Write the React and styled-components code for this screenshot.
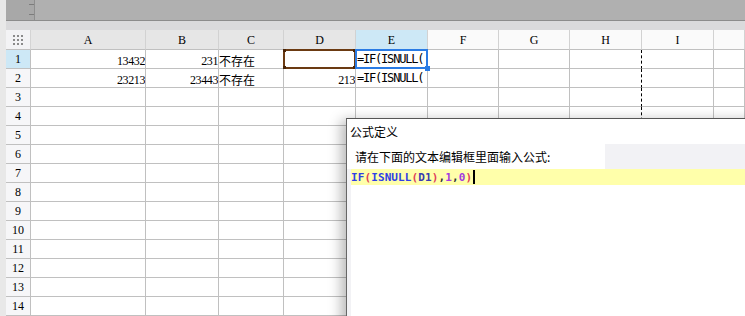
import React from "react";
import styled, { createGlobalStyle } from "styled-components";

const GlobalStyle = createGlobalStyle`
  html, body {
    margin: 0;
    padding: 0;
    background: #ffffff;
    overflow: hidden;
  }
`;

const COLS = ["A", "B", "C", "D", "E", "F", "G", "H", "I", ""];
const ROWS = Array.from({ length: 14 }, (_, i) => i + 1);

// cell contents, keyed "row-col"
const DATA = {
  "1-A": { text: "13432", kind: "num" },
  "1-B": { text: "231", kind: "num" },
  "1-C": { text: "不存在", kind: "cjk" },
  "1-E": { text: "=IF(ISNULL(", kind: "formula" },
  "2-A": { text: "23213", kind: "num" },
  "2-B": { text: "23443", kind: "num" },
  "2-C": { text: "不存在", kind: "cjk" },
  "2-D": { text: "213", kind: "num" },
  "2-E": { text: "=IF(ISNULL(", kind: "formula" },
};

const Page = styled.div`
  position: relative;
  width: 745px;
  height: 316px;
  overflow: hidden;
  background: #e8e8e8;
  padding-left: 6px;
  box-sizing: border-box;
  display: flex;
  flex-direction: column;
`;

const TopBar = styled.div`
  height: 24px;
  border-bottom: 1px solid #8c8c8c;
  background: #b0b0b0;
  display: flex;
`;

const RulerStub = styled.div`
  width: 29px;
  border-right: 1px solid #8e8e8e;
  background: #a8a8a8;
  display: flex;
  flex-direction: column;
  align-items: flex-end;
  gap: 9px;
  padding-top: 4px;
  box-sizing: border-box;
`;

const Tick = styled.span`
  display: block;
  width: 5px;
  height: 1px;
  background: #7c7c7c;
`;

const Band = styled.div`
  height: 10px;
  background: #dadadc;
`;

const Sheet = styled.div`
  display: grid;
  grid-template-columns: 25px 115px 73px 65px 72px 72px 71px 71px 72px 72px 1fr;
  grid-template-rows: 20px;
  grid-auto-rows: 19px;
  background: #ffffff;
  flex: 1;
`;

const Corner = styled.div`
  background: #f3f3f5;
  border-right: 1px solid #d4d4d4;
  border-bottom: 1px solid #c0c0c0;
  display: grid;
  grid-template-columns: repeat(3, 2px);
  grid-template-rows: repeat(3, 2px);
  gap: 2px;
  align-content: center;
  justify-content: center;
  padding-top: 1px;
  box-sizing: border-box;
`;

const Dot = styled.span`
  background: #8a8a8a;
`;

const HEAD_BG = { gray: "#e6e6e6", sel: "#cde8f6", white: "#fafafa" };

const ColHead = styled.div`
  background: ${({ $tone }) => HEAD_BG[$tone]};
  border-right: 1px solid #d2d2d2;
  border-bottom: 1px solid #c0c0c0;
  display: flex;
  align-items: center;
  justify-content: center;
  padding-top: 2px;
  box-sizing: border-box;
  font-family: "Liberation Serif", serif;
  font-size: 12px;
  color: #000;
`;

const RowHead = styled.div`
  background: ${({ $sel }) => ($sel ? "#cde8f6" : "#f6f6f8")};
  border-right: 1px solid #c0c0c0;
  border-bottom: 1px solid #c0c0c0;
  display: flex;
  align-items: center;
  justify-content: center;
  font-family: "Liberation Serif", serif;
  font-size: 12px;
  color: #000;
`;

const Cell = styled.div`
  position: relative;
  border-right: 1px ${({ $dashed }) => ($dashed ? "dashed #000" : "solid #c0c0c0")};
  border-bottom: 1px solid #c0c0c0;
  display: flex;
  justify-content: ${({ $right }) => ($right ? "flex-end" : "flex-start")};
  min-width: 0;
  overflow: visible;
`;

const CellText = styled.span`
  display: block;
  overflow: hidden;
  white-space: nowrap;
  line-height: 14px;
  padding-top: ${({ $kind }) => ($kind === "formula" ? "2px" : "4px")};
  padding-left: ${({ $kind }) => ($kind === "formula" ? "1px" : "0")};
  font-family: ${({ $kind }) =>
    $kind === "formula"
      ? '"DejaVu Sans Mono", monospace'
      : $kind === "cjk"
      ? '"Noto Sans CJK SC", sans-serif'
      : '"Liberation Serif", serif'};
  font-size: ${({ $kind }) => ($kind === "formula" ? "12px" : "12px")};
  letter-spacing: ${({ $kind }) =>
    $kind === "formula" ? "-1.2px" : $kind === "num" ? "-0.4px" : "0"};
  color: #000;
`;

const Marquee = styled.span`
  position: absolute;
  top: -1px;
  left: -1px;
  right: -1px;
  bottom: -1px;
  border: 2px solid ${({ $color }) => $color};
  pointer-events: none;
  z-index: 2;
`;

const Knob = styled.span`
  position: absolute;
  width: ${({ $size }) => $size}px;
  height: ${({ $size }) => $size}px;
  background: ${({ $color }) => $color};
  ${({ $at }) => $at}
`;

const Dialog = styled.div`
  position: absolute;
  left: 346px;
  top: 118px;
  width: 440px;
  height: 220px;
  border-left: 1px solid #666;
  border-top: 1px solid #555;
  background: #f2f2f5;
  box-shadow: -5px 2px 12px rgba(0, 0, 0, 0.28);
  display: flex;
  flex-direction: column;
  z-index: 5;
`;

const TitleBar = styled.div`
  height: 25px;
  background: #ffffff;
  display: flex;
  align-items: center;
  padding-left: 3px;
  font-family: "Noto Sans CJK SC", sans-serif;
  font-size: 12px;
  color: #000;
`;

const LabelRow = styled.div`
  height: 25px;
  display: flex;
`;

const Label = styled.div`
  width: 250px;
  background: #ffffff;
  display: flex;
  align-items: center;
  padding-left: 8px;
  font-family: "Noto Sans CJK SC", sans-serif;
  font-size: 12px;
  color: #000;
`;

const Editor = styled.div`
  flex: 1;
  margin-left: 4px;
  background: #ffffff;
`;

const EditorLine = styled.div`
  height: 16px;
  background: ${({ $current }) => ($current ? "#ffffaa" : "transparent")};
  display: flex;
  align-items: center;
  font-family: "DejaVu Sans Mono", monospace;
  font-weight: bold;
  font-size: 11px;
  letter-spacing: 0.1px;
`;

const TOKEN_COLOR = {
  fn: "#2f3fe6",
  paren: "#e0405a",
  ref: "#3b3bb0",
  num: "#a23be0",
  sep: "#333333",
};

const Tok = styled.span`
  color: ${({ $t }) => TOKEN_COLOR[$t]};
`;

const Caret = styled.span`
  display: inline-block;
  width: 2px;
  height: 14px;
  margin-left: 1px;
  background: #000;
`;

const FORMULA = [
  ["IF", "fn"],
  ["(", "paren"],
  ["ISNULL", "fn"],
  ["(", "paren"],
  ["D1", "ref"],
  [")", "paren"],
  [",", "sep"],
  ["1", "num"],
  [",", "sep"],
  ["0", "num"],
  [")", "paren"],
];

const headTone = (c) => {
  if (c === "E") return "sel";
  if (["A", "B", "C", "D"].includes(c)) return "gray";
  return "white";
};

export default function App() {
  return (
    <>
      <GlobalStyle />
      <Page>
        <TopBar>
          <RulerStub>
            <Tick />
            <Tick />
          </RulerStub>
        </TopBar>
        <Band />
        <Sheet>
          <Corner>
            {Array.from({ length: 9 }, (_, i) => (
              <Dot key={i} />
            ))}
          </Corner>
          {COLS.map((c, i) => (
            <ColHead key={i} $tone={headTone(c)}>
              {c}
            </ColHead>
          ))}
          {ROWS.map((r) => (
            <React.Fragment key={r}>
              <RowHead $sel={r === 1}>{r}</RowHead>
              {COLS.map((c, i) => {
                const d = DATA[`${r}-${c}`];
                const isD1 = r === 1 && c === "D";
                const isE1 = r === 1 && c === "E";
                return (
                  <Cell key={i} $right={d && d.kind === "num"} $dashed={c === "H"}>
                    {d && <CellText $kind={d.kind}>{d.text}</CellText>}
                    {isD1 && (
                      <Marquee $color="#6b3a12">
                        <Knob $size={3} $color="#4a2508" $at="top:-2px;left:-2px;" />
                        <Knob $size={3} $color="#4a2508" $at="top:-2px;right:-2px;" />
                        <Knob $size={3} $color="#4a2508" $at="bottom:-2px;left:-2px;" />
                        <Knob $size={3} $color="#4a2508" $at="bottom:-2px;right:-2px;" />
                      </Marquee>
                    )}
                    {isE1 && (
                      <Marquee $color="#2a7be4">
                        <Knob $size={5} $color="#2a7be4" $at="bottom:-4px;right:-4px;" />
                      </Marquee>
                    )}
                  </Cell>
                );
              })}
            </React.Fragment>
          ))}
        </Sheet>
        <Dialog>
          <TitleBar>公式定义</TitleBar>
          <LabelRow>
            <Label>请在下面的文本编辑框里面输入公式:</Label>
          </LabelRow>
          <Editor>
            <EditorLine $current>
              {FORMULA.map(([t, k], i) => (
                <Tok key={i} $t={k}>
                  {t}
                </Tok>
              ))}
              <Caret />
            </EditorLine>
          </Editor>
        </Dialog>
      </Page>
    </>
  );
}
